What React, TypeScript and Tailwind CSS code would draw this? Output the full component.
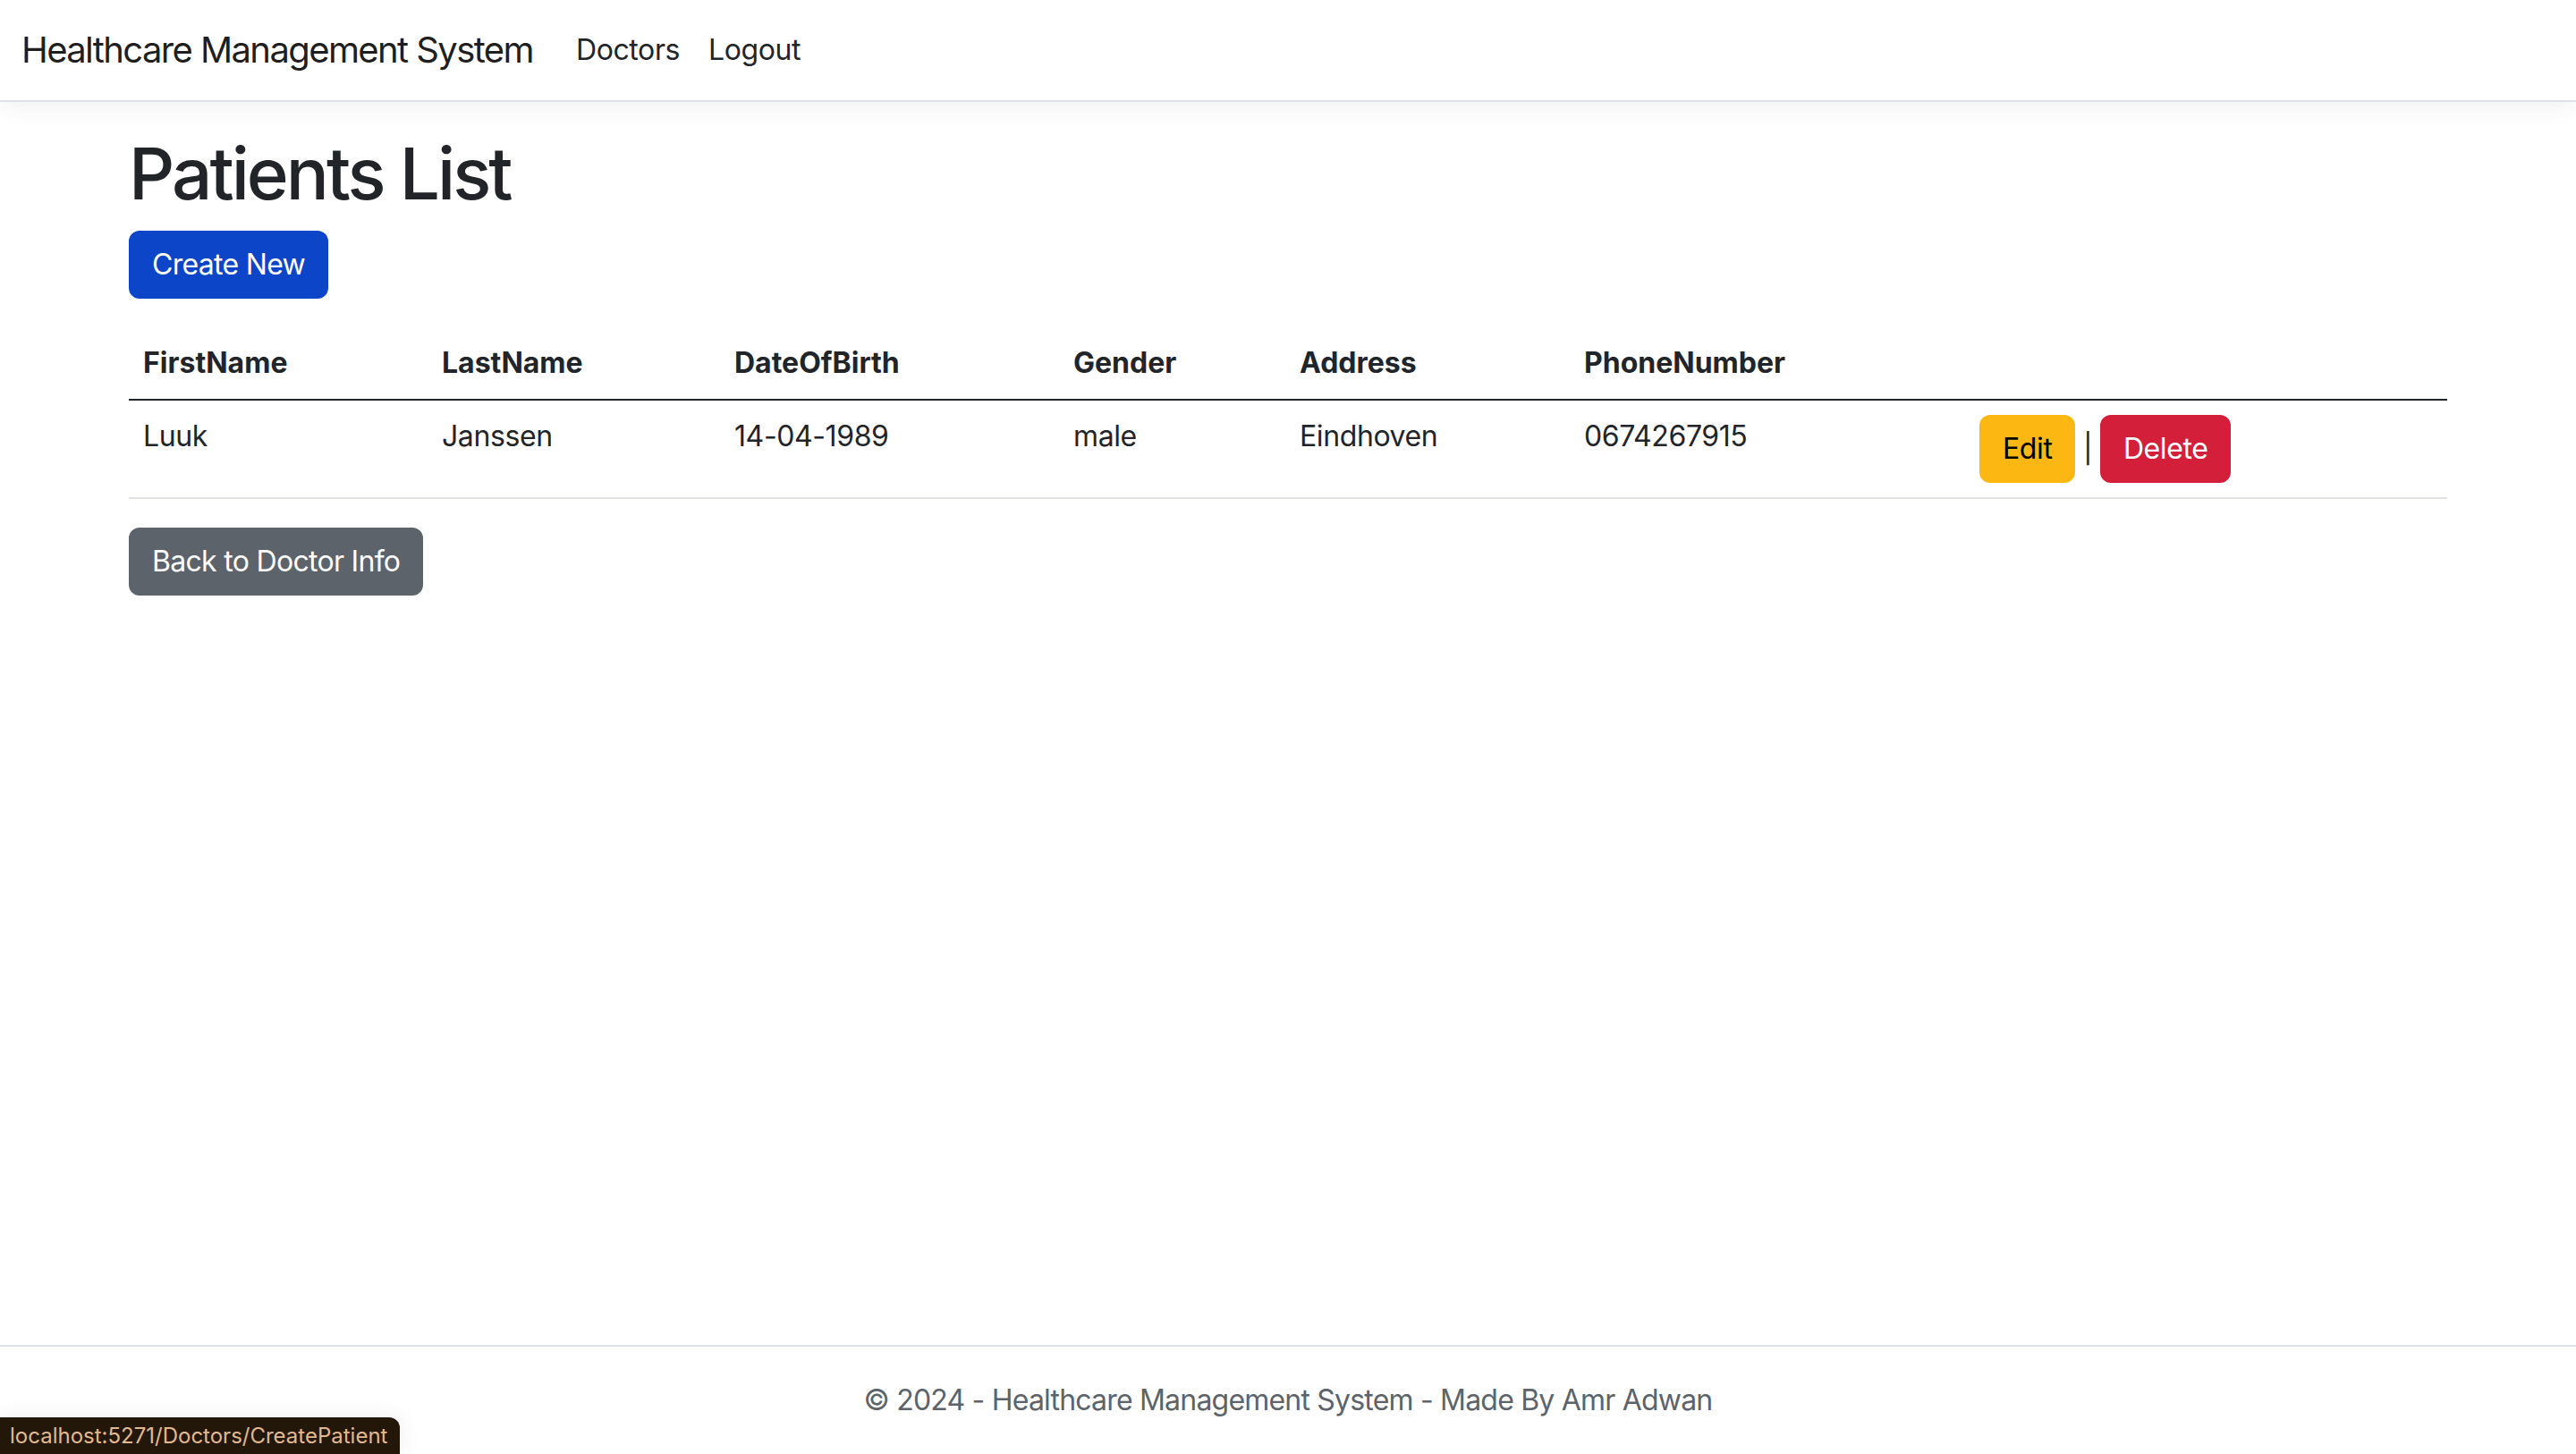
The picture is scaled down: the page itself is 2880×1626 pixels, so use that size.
const patients = [
    {
        firstName: "Luuk",
        lastName: "Janssen",
        dateOfBirth: "14-04-1989",
        gender: "male",
        address: "Eindhoven",
        phone: "0674267915",
    },
]

const Navbar = () => {
    return (
        <nav className="relative z-10 flex h-[114px] items-center border-b-2 border-[#dee2e6] bg-white px-6 shadow-[0_8px_24px_rgba(0,0,0,0.05)]">
            <a className="mr-8 text-[40px] leading-[60px] tracking-[-1.6px] text-[rgba(0,0,0,0.9)]">Healthcare Management System</a>
            <ul className="flex text-[32px] leading-[48px] tracking-[-0.4px] text-[#212529]">
                <li className="px-4">Doctors</li>
                <li className="px-4">Logout</li>
            </ul>
        </nav>
    )
}

const App = () => {
    return (
        <div className="relative flex min-h-[1626px] flex-col bg-white text-[#212529] font-['Inter','Noto_Sans',sans-serif]">
            <Navbar />
            <main className="mx-auto mt-8 w-[2592px]">
                <h1 className="mb-4 text-[80px] font-medium leading-[96px] tracking-[-3px]">Patients List</h1>
                <p className="mb-8">
                    <a className="inline-block rounded-xl border-2 border-[#0d45c9] bg-[#0d45c9] px-6 py-3 text-[32px] leading-[48px] tracking-[-0.7px] text-white">
                        Create New
                    </a>
                </p>
                <table className="mb-8 w-full table-fixed border-collapse text-left text-[32px] leading-[48px]">
                    <thead>
                        <tr className="border-b-2 border-[#212529]">
                            <th className="w-[334px] p-4 font-bold">FirstName</th>
                            <th className="w-[327px] p-4 font-bold">LastName</th>
                            <th className="w-[379px] p-4 font-bold">DateOfBirth</th>
                            <th className="w-[253px] p-4 font-bold">Gender</th>
                            <th className="w-[318px] p-4 font-bold">Address</th>
                            <th className="w-[442px] p-4 font-bold">PhoneNumber</th>
                            <th className="w-[539px] p-4"></th>
                        </tr>
                    </thead>
                    <tbody className="tracking-[-0.4px]">
                        {patients.map((p) => (
                            <tr key={p.phone} className="border-b-2 border-[#dee2e6] align-top">
                                <td className="p-4">{p.firstName}</td>
                                <td className="p-4">{p.lastName}</td>
                                <td className="p-4">{p.dateOfBirth}</td>
                                <td className="p-4">{p.gender}</td>
                                <td className="p-4">{p.address}</td>
                                <td className="p-4">{p.phone}</td>
                                <td className="p-4 whitespace-nowrap">
                                    <a className="inline-block rounded-xl border-2 border-[#fdb713] bg-[#fdb713] px-6 py-3 text-black">Edit</a>
                                    {" | "}
                                    <a className="inline-block rounded-xl border-2 border-[#d41f3a] bg-[#d41f3a] px-6 py-3 text-white">Delete</a>
                                </td>
                            </tr>
                        ))}
                    </tbody>
                </table>
                <a className="inline-block rounded-xl border-2 border-[#5c636a] bg-[#5c636a] px-6 py-3 text-[32px] leading-[48px] tracking-[-0.7px] text-white">
                    Back to Doctor Info
                </a>
            </main>
            <footer className="mt-auto border-t-2 border-[#dee2e6] text-center text-[32px] leading-[120px] tracking-[-0.8px] text-[#5c636a] whitespace-nowrap">
                © 2024 - Healthcare Management System - Made By Amr Adwan
            </footer>
            <div className="absolute bottom-0 left-0 rounded-tr-xl bg-[#231709] py-[6px] pl-[11px] pr-[14px] text-[24px] leading-[29px] text-[#e2b98f] shadow-[0_0_24px_rgba(0,0,0,0.08)]">
                localhost:5271/Doctors/CreatePatient
            </div>
        </div>
    )
}

export default App
